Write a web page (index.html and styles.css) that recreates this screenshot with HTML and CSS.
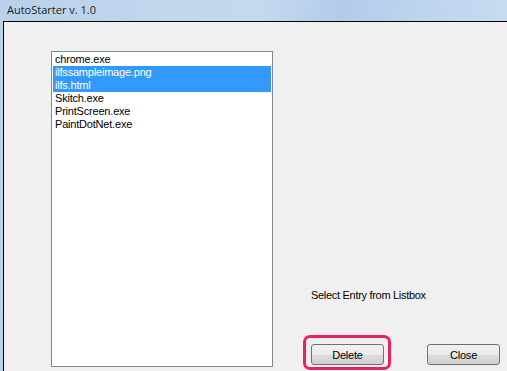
FILE: index.html
```html
<!DOCTYPE html>
<html lang="en">
<head>
    <meta charset="UTF-8">
    <meta name="viewport" content="width=device-width, initial-scale=1.0">
    <title>AutoStarter v. 1.0</title>
    <link rel="stylesheet" href="styles.css">
</head>
<body>
    <div class="titlebar">AutoStarter v. 1.0</div>

    <div class="frame">
        <span class="speck"></span>
        <div class="content">
            <ul class="listbox">
                <li>chrome.exe</li>
                <li class="selected">ilfssampleimage.png</li>
                <li class="selected">ilfs.html</li>
                <li>Skitch.exe</li>
                <li>PrintScreen.exe</li>
                <li>PaintDotNet.exe</li>
            </ul>

            <div class="side">
                <p class="hint">Select Entry from Listbox</p>
                <div class="buttons">
                    <div class="marked">
                        <button>Delete</button>
                        <span class="highlight"></span>
                    </div>
                    <button>Close</button>
                </div>
            </div>
        </div>
    </div>
</body>
</html>
```

FILE: styles.css
```css
body {
    margin: 0;
    height: 371px;
    overflow: hidden;
    font-family: "Liberation Sans", Arial, sans-serif;
    background: linear-gradient(100deg, #b9d1ea 0%, #c4d9ef 45%, #b3cde9 60%, #cfe1f5 100%);
    color: #000;
}

.titlebar {
    height: 21px;
    line-height: 20px;
    padding-left: 7px;
    font-family: "Open Sans", "DejaVu Sans", sans-serif;
    font-size: 11px;
    color: #1c1c1c;
}

.frame {
    position: relative;
    margin-left: 3px;
    height: 350px;
    background-color: #f0f0f0;
    border-top: 1px solid #000;
    border-left: 1px solid #000;
}

.speck {
    position: absolute;
    left: 73px;
    top: 19px;
    width: 2px;
    height: 2px;
    border-radius: 1px;
    background-color: #fff;
}

.content {
    display: flex;
    padding: 29px 0 0 47px;
}

.listbox {
    box-sizing: border-box;
    width: 222px;
    height: 316px;
    margin: 0;
    padding: 1px;
    list-style: none;
    background-color: #fff;
    border: 1px solid #828790;
    font-size: 11px;
}

.listbox li {
    height: 13px;
    line-height: 13px;
    padding-left: 2px;
    letter-spacing: -0.2px;
}

.listbox li.selected {
    background-color: #3399ff;
    color: #fff;
}

.side {
    display: flex;
    flex-direction: column;
    justify-content: flex-end;
    margin-left: 38px;
    padding-bottom: 2px;
}

.hint {
    margin: 0 0 42px 0;
    font-size: 11px;
    line-height: 13px;
    letter-spacing: -0.3px;
}

.buttons {
    display: flex;
    gap: 43px;
}

.marked {
    position: relative;
}

.buttons button {
    display: block;
    width: 73px;
    height: 21px;
    padding: 0;
    font-family: "Liberation Sans", Arial, sans-serif;
    font-size: 11px;
    letter-spacing: -0.2px;
    color: #000;
    border: 1px solid #707070;
    border-radius: 3px;
    background: linear-gradient(#f2f2f2 0%, #ebebeb 50%, #dddddd 51%, #cfcfcf 100%);
}

.highlight {
    position: absolute;
    top: -9px;
    left: -8px;
    right: -7px;
    bottom: -5px;
    border: 3px solid #e8215f;
    border-radius: 7px;
}
```
